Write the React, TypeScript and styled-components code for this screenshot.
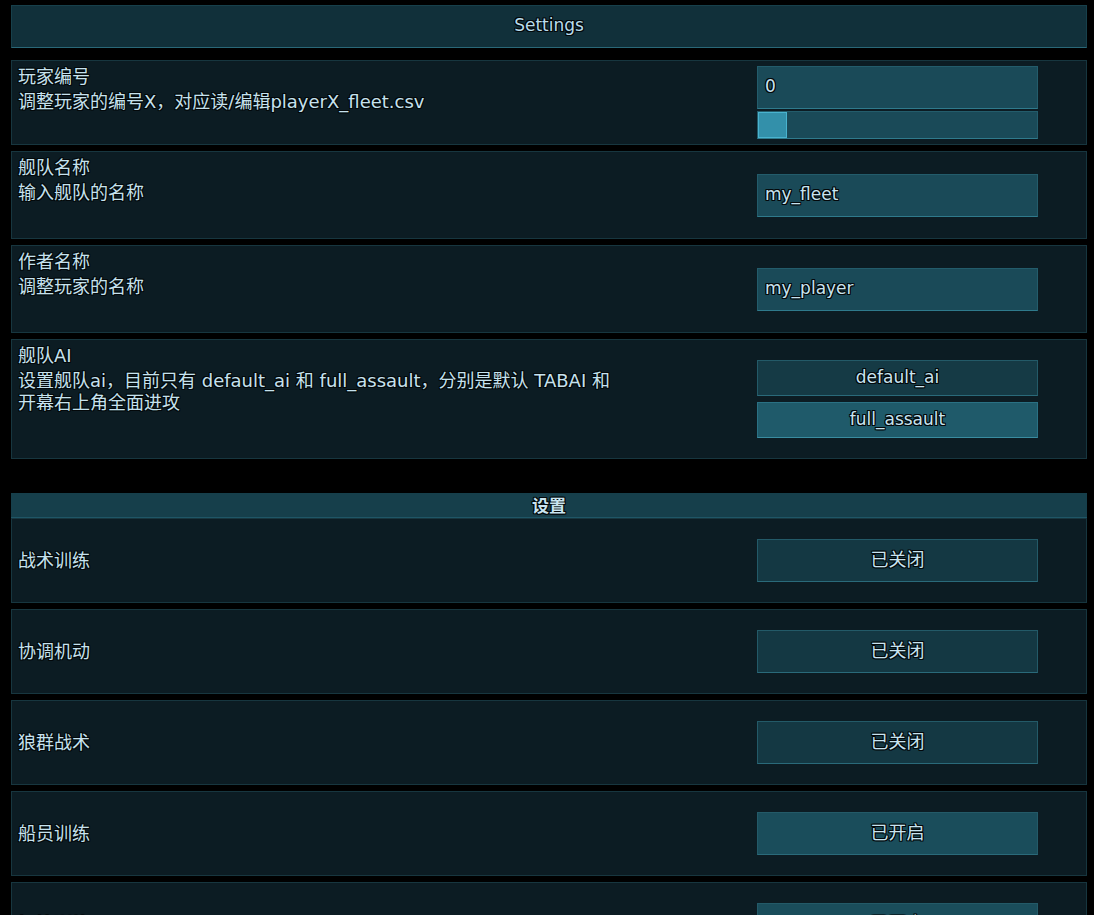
import React, { useState } from 'react';
import styled, { createGlobalStyle } from 'styled-components';

const GlobalStyle = createGlobalStyle`
  html, body {
    margin: 0;
    padding: 0;
    background: #000;
    overflow: hidden;
  }
  body {
    font-family: "DejaVu Sans", "Noto Sans CJK SC", sans-serif;
  }
`;

const outline = `
  text-shadow:
    1px 0 0 #03080a, -1px 0 0 #03080a, 0 1px 0 #03080a, 0 -1px 0 #03080a,
    1px 1px 0 #03080a, -1px -1px 0 #03080a, 1px -1px 0 #03080a, -1px 1px 0 #03080a;
`;

const Page = styled.div`
  padding: 5px 7px 0 11px;
  display: flex;
  flex-direction: column;
  height: 915px;
  overflow: hidden;
  box-sizing: border-box;

  & > * {
    flex-shrink: 0;
  }
`;

const Header = styled.div`
  height: 43px;
  box-sizing: border-box;
  padding-bottom: 4px;
  background: #11303a;
  border: 1px solid #17404b;
  border-bottom-color: #2a6878;
  display: flex;
  align-items: center;
  justify-content: center;
  color: #b8dcec;
  font-size: 17px;
  ${outline}
`;

const List = styled.div`
  display: flex;
  flex-direction: column;
  gap: 6px;
  margin-top: 12px;
`;

const Row = styled.div<{ $min: number }>`
  min-height: ${(p) => p.$min}px;
  box-sizing: border-box;
  background: #0c1c23;
  border: 1px solid #17363f;
  display: grid;
  grid-template-columns: 1fr 281px;
  column-gap: 20px;
  padding: 4px 48px 4px 6px;
  flex-shrink: 0;
`;

const Texts = styled.div<{ $center?: boolean }>`
  display: flex;
  flex-direction: column;
  justify-content: ${(p) => (p.$center ? 'center' : 'flex-start')};
  color: #c6e2ee;
  font-size: 18px;
  ${outline}
`;

const Title = styled.div`
  line-height: 24px;
`;

const Desc = styled.div`
  margin-top: 2px;
  line-height: 22px;
`;

const Controls = styled.div`
  display: flex;
  flex-direction: column;
  justify-content: center;
  gap: 2px;
`;

const Field = styled.div`
  height: 43px;
  box-sizing: border-box;
  background: #1a4a58;
  border: 1px solid #235c6b;
  border-bottom-color: #2f7a8c;
  display: flex;
  align-items: center;
  padding: 0 7px 3px;
  color: #c8e4f0;
  font-size: 17px;
  ${outline}
`;

const Track = styled.div`
  height: 28px;
  box-sizing: border-box;
  background: #1a4a58;
  border: 1px solid #235c6b;
  border-bottom-color: #2f7a8c;
  display: flex;
`;

const Thumb = styled.div`
  width: 29px;
  height: 100%;
  box-sizing: border-box;
  background: #3390aa;
  border: 1px solid #49b3cf;
`;

const Choice = styled.button<{ $active?: boolean; $tall?: boolean }>`
  height: ${(p) => (p.$tall ? 43 : 36)}px;
  box-sizing: border-box;
  background: ${(p) => (p.$active ? '#1f5a6a' : '#153a45')};
  border: 1px solid ${(p) => (p.$active ? '#2a7184' : '#235a68')};
  border-bottom-color: ${(p) => (p.$active ? '#3a8ca0' : '#2a6a7a')};
  color: #c8e4f0;
  font-family: inherit;
  font-size: 17px;
  padding: 0 0 3px;
  cursor: pointer;
  ${outline}
`;

const Toggle = styled(Choice)<{ $on: boolean }>`
  background: ${(p) => (p.$on ? '#1a4d5b' : '#143843')};
  font-size: 18px;
  padding-bottom: 5px;
`;

const AiList = styled(Controls)`
  gap: 6px;
`;

const SectionHead = styled.div`
  margin-top: 34px;
  height: 25px;
  box-sizing: border-box;
  padding-bottom: 2px;
  background: #163f4b;
  border-bottom: 1px solid #1f5666;
  display: flex;
  align-items: center;
  justify-content: center;
  color: #c8e4f0;
  font-size: 17px;
  font-weight: bold;
  ${outline}
`;

const SectionList = styled(List)`
  margin-top: 0;
`;

const tactics = [
  { name: '战术训练', on: false },
  { name: '协调机动', on: false },
  { name: '狼群战术', on: false },
  { name: '船员训练', on: true },
  { name: '损管训练', on: true },
];

const App: React.FC = () => {
  const [ai, setAi] = useState('full_assault');
  const [flags, setFlags] = useState(tactics.map((t) => t.on));

  return (
    <>
      <GlobalStyle />
      <Page>
        <Header>Settings</Header>
        <List>
          <Row $min={85}>
            <Texts>
              <Title>玩家编号</Title>
              <Desc>调整玩家的编号X，对应读/编辑playerX_fleet.csv</Desc>
            </Texts>
            <Controls>
              <Field>0</Field>
              <Track>
                <Thumb />
              </Track>
            </Controls>
          </Row>
          <Row $min={88}>
            <Texts>
              <Title>舰队名称</Title>
              <Desc>输入舰队的名称</Desc>
            </Texts>
            <Controls>
              <Field>my_fleet</Field>
            </Controls>
          </Row>
          <Row $min={88}>
            <Texts>
              <Title>作者名称</Title>
              <Desc>调整玩家的名称</Desc>
            </Texts>
            <Controls>
              <Field>my_player</Field>
            </Controls>
          </Row>
          <Row $min={120}>
            <Texts>
              <Title>舰队AI</Title>
              <Desc>
                设置舰队ai，目前只有 default_ai 和 full_assault，分别是默认 TABAI 和
                <br />
                开幕右上角全面进攻
              </Desc>
            </Texts>
            <AiList>
              {['default_ai', 'full_assault'].map((k) => (
                <Choice key={k} $active={ai === k} onClick={() => setAi(k)}>
                  {k}
                </Choice>
              ))}
            </AiList>
          </Row>
        </List>

        <SectionHead>设置</SectionHead>
        <SectionList>
          {tactics.map((t, i) => (
            <Row $min={85} key={t.name}>
              <Texts $center>
                <Title>{t.name}</Title>
              </Texts>
              <Controls>
                <Toggle
                  $tall
                  $on={flags[i]}
                  onClick={() => setFlags(flags.map((f, j) => (j === i ? !f : f)))}
                >
                  {flags[i] ? '已开启' : '已关闭'}
                </Toggle>
              </Controls>
            </Row>
          ))}
        </SectionList>
      </Page>
    </>
  );
};

export default App;
